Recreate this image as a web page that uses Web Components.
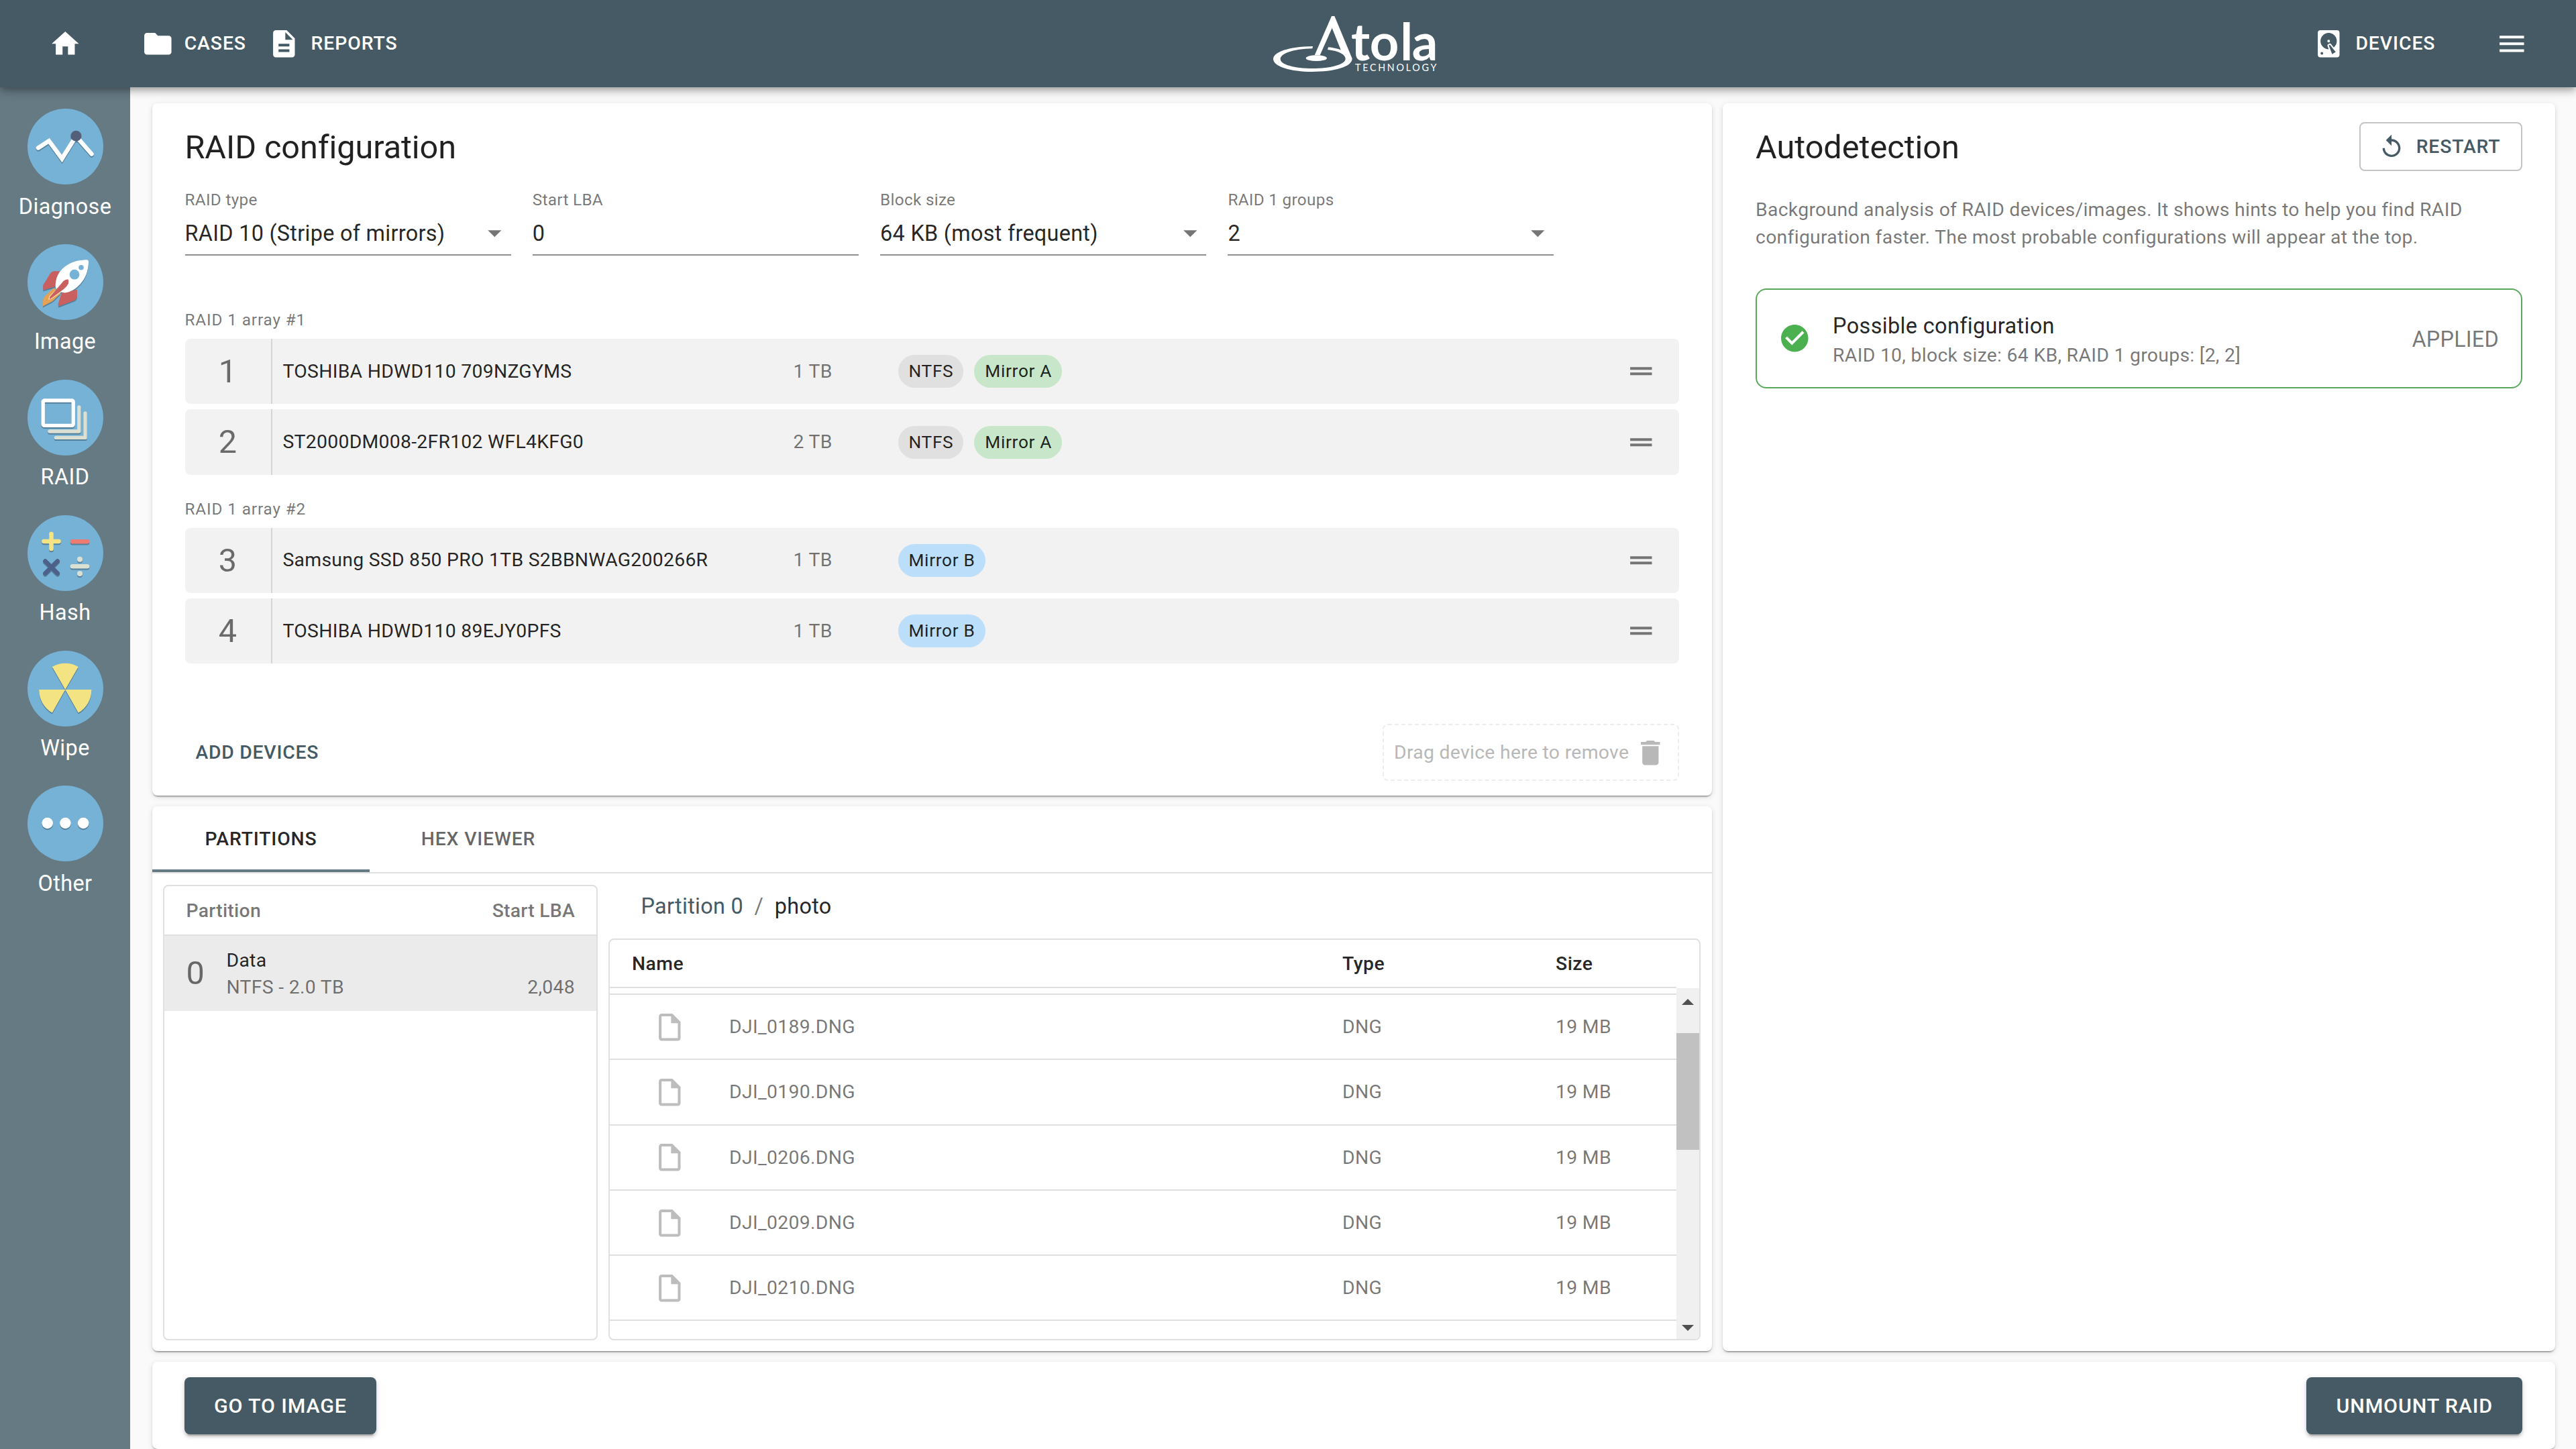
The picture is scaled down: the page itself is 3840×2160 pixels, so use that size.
<!DOCTYPE html>
<html lang="en">
<head>
<meta charset="utf-8">
<title>RAID configuration</title>
<style>
    html, body {
        margin: 0;
        height: 100%;
        overflow: hidden;
    }
    body {
        background: #fafafa;
        color: rgba(0, 0, 0, .87);
        font: 400 28.35px/40px Roboto, sans-serif;
        letter-spacing: .0107em;
    }
</style>
</head>
<body>
<raid-page></raid-page>

<script>
const ICONS = {
    home: 'M10 20v-6h4v6h5v-8h3L12 3 2 12h3v8z',
    folder: 'M10 4H4c-1.1 0-1.99.9-1.99 2L2 18c0 1.1.9 2 2 2h16c1.1 0 2-.9 2-2V8c0-1.1-.9-2-2-2h-8l-2-2z',
    report: 'M14 2H6c-1.1 0-1.99.9-1.99 2L4 20c0 1.1.89 2 1.99 2H18c1.1 0 2-.9 2-2V8l-6-6zm2 16H8v-2h8v2zm0-4H8v-2h8v2zm-3-5V3.5L18.5 9H13z',
    disk: 'M6,2H18A2,2 0 0,1 20,4V20A2,2 0 0,1 18,22H6A2,2 0 0,1 4,20V4A2,2 0 0,1 6,2M12,4A6,6 0 0,0 6,10C6,13.31 8.69,16 12.1,16L11.22,13.77C10.95,13.29 11.11,12.68 11.59,12.4L12.45,11.9C12.93,11.63 13.54,11.79 13.82,12.27L15.74,14.69C17.12,13.59 18,11.9 18,10A6,6 0 0,0 12,4M12,9A1,1 0 0,1 13,10A1,1 0 0,1 12,11A1,1 0 0,1 11,10A1,1 0 0,1 12,9M7,18A1,1 0 0,0 6,19A1,1 0 0,0 7,20A1,1 0 0,0 8,19A1,1 0 0,0 7,18M12.09,13.27L14.58,19.58L17.17,18.08L12.95,12.77L12.09,13.27Z',
    menu: 'M3 18h18v-2H3v2zm0-5h18v-2H3v2zm0-7v2h18V6H3z',
    arrow: 'M7 10l5 5 5-5z',
    handle: 'M20 9H4v2h16V9zM4 15h16v-2H4v2z',
    trash: 'M6 19c0 1.1.9 2 2 2h8c1.1 0 2-.9 2-2V7H6v12zM19 4h-3.5l-1-1h-5l-1 1H5v2h14V4z',
    replay: 'M12 5V1L7 6l5 5V7c3.31 0 6 2.69 6 6s-2.69 6-6 6-6-2.69-6-6H4c0 4.42 3.58 8 8 8s8-3.58 8-8-3.58-8-8-8z',
    check: 'M12 2C6.48 2 2 6.48 2 12s4.48 10 10 10 10-4.48 10-10S17.52 2 12 2zm-2 15l-5-5 1.41-1.41L10 14.17l7.59-7.59L19 8l-9 9z',
    file: 'M14 2H6c-1.1 0-1.99.9-1.99 2L4 20c0 1.1.89 2 1.99 2H18c1.1 0 2-.9 2-2V8l-6-6zM6 20V4h7v5h5v11H6z'
};

// round sidebar pictures, drawn on a 113px disc
const PICTURES = {
    diagnose: `
        <g fill="none" stroke="#fff" stroke-width="6.4" stroke-linecap="round">
            <path d="M16 58.5L32 48L51.4 74.5L72.4 41L95.5 67.5"/>
        </g>
        <circle cx="72.4" cy="40.7" r="8" fill="#54607a"/>`,
    image: `
        <path fill="#c95f5f" d="M48.3 40.3H39Q35.5 41 33 45L23.3 61V68.6L41.3 63.3Z"/>
        <path fill="#c95f5f" d="M74 67.8V77.4Q73.5 82 69 84L46.3 92.7L45.7 89L50.7 72.8Z"/>
        <path fill="#e6a155" d="M39 65.2L27.3 76.3Q23 80 23 86V92.5L37.3 85L49 74Z"/>
        <path fill="#fff" d="M88 23.3Q91.3 23.2 91 27C90.5 40 86.5 51 79 59C72 67 63 72 55.7 72.4L45 70.5Q41.5 66 41.7 60C42.5 46 50 36 61 30C70 25 79 23.6 88 23.3Z"/>
        <path fill="#f1d9a6" d="M32 78L44 66L50 72L36 81.5L31 83Z"/>
        <path fill="#c95f5f" d="M54 54.5Q57.5 52 60.7 52.5Q62 55 61 58.5Q59 63 54 67L33.5 82L33 79Z"/>
        <circle cx="70" cy="45.2" r="7.4" fill="#76b2d6"/>
        <circle cx="80" cy="34.8" r="3.8" fill="#76b2d6"/>`,
    raid: `
        <g fill="none" stroke-width="5.4" stroke-linecap="round" stroke-linejoin="round">
            <path stroke="#dbe0d3" d="M86 50V86.4H42.5M76.8 41V77H33"/>
            <rect x="23.2" y="31" width="45" height="37.4" rx="2" stroke="#fff"/>
        </g>`,
    hash: `
        <g fill="none" stroke-width="6.6" stroke-linecap="round">
            <path stroke="#f5e384" d="M24.5 39H46.5M35.5 28V50"/>
            <path stroke="#ee7b70" d="M67 39.2H89"/>
            <path stroke="#4d608a" d="M26.5 68.5L44.7 86.5M44.7 68.5L26.5 86.5"/>
            <path stroke="#dbe0d3" d="M67 76.2H89"/>
        </g>
        <g fill="#dbe0d3"><circle cx="78" cy="65.7" r="4"/><circle cx="78" cy="87" r="4"/></g>`,
    wipe: `
        <path fill="#f3e383" d="M56.3 58L36.8 23.9A39 39 0 0 1 75.8 23.9ZM56.3 58H95.3A39 39 0 0 1 75.8 92.5ZM56.3 58L36.8 92.5A39 39 0 0 1 17.3 58Z"/>`,
    other: `
        <g fill="#fff"><circle cx="29.7" cy="56" r="8.3"/><circle cx="56.4" cy="56" r="8.3"/><circle cx="83.2" cy="56" r="8.3"/></g>`
};

class BaseElement extends HTMLElement {
    connectedCallback() {
        if (this.shadowRoot) return;
        this.attachShadow({ mode: 'open' }).innerHTML = this.render();
    }
    attr(name) {
        return this.getAttribute(name) ?? '';
    }
}

class AppIcon extends BaseElement {
    render() {
        const size = this.getAttribute('size') ?? '48.6';
        return `
        <style>
            :host { display: block; flex: none; width: ${size}px; height: ${size}px; }
            svg { display: block; width: 100%; height: 100%; fill: currentColor; }
        </style>
        <svg viewBox="0 0 24 24"><path d="${ICONS[this.attr('name')]}"/></svg>`;
    }
}

class AtolaLogo extends BaseElement {
    render() {
        return `
        <style>
            :host { display: block; width: 330px; height: 130px; }
            svg { display: block; fill: #fff; }
        </style>
        <svg width="330" height="130" viewBox="0 0 990 390">
            <path d="M291 207C180 208 114 234 114 264C114 298 195 321 287 321C385 321 467 300 467 262L388 72H375L299 247H323L377 125L416 223C397 216 380 213 360 211L357 222C408 228 437 244 437 263C437 288 370 306 290 306C208 306 146 289 146 264C146 239 205 219 289 217Z"/>
            <ellipse cx="307" cy="260" rx="47" ry="13"/>
            <text x="462 545 682 734" y="270" font-family="Lato" font-size="228" font-weight="700" letter-spacing="0">tola</text>
            <text x="480" y="318" font-family="Lato" font-size="43" textLength="364" letter-spacing="0">TECHNOLOGY</text>
        </svg>`;
    }
}

class NavLink extends BaseElement {
    render() {
        return `
        <style>
            :host { display: flex; align-items: center; font-weight: 500; letter-spacing: .0325em; }
            span { margin-left: var(--text-gap, 15px); }
        </style>
        <app-icon name="${this.attr('icon')}"></app-icon><span><slot></slot></span>`;
    }
}

class TopBar extends BaseElement {
    render() {
        return `
        <style>
            :host {
                display: grid; grid-template-columns: 1fr 330px 1fr; height: 130px;
                background: #455a64; color: #fff; position: relative; z-index: 1;
                box-shadow: 0 4px 8px -2px rgba(0,0,0,.2), 0 8px 10px rgba(0,0,0,.14), 0 2px 20px rgba(0,0,0,.12);
            }
            div { display: flex; align-items: center; }
            .left { padding-left: 73px; }
            .left nav-link:nth-of-type(1) { margin-left: 89.5px; }
            .left nav-link:nth-of-type(2) { margin-left: 32px; --text-gap: 16px; }
            .right { justify-content: flex-end; padding-right: 71px; }
            .right nav-link { margin-right: 90px; --text-gap: 15.5px; }
            atola-logo { margin-left: 105px; }
        </style>
        <div class="left">
            <app-icon name="home"></app-icon>
            <nav-link icon="folder">CASES</nav-link>
            <nav-link icon="report">REPORTS</nav-link>
        </div>
        <atola-logo></atola-logo>
        <div class="right">
            <nav-link icon="disk">DEVICES</nav-link>
            <app-icon name="menu"></app-icon>
        </div>`;
    }
}

class SideItem extends BaseElement {
    render() {
        return `
        <style>
            :host {
                display: flex; flex-direction: column; align-items: center; height: 201.9px;
                color: #fff; font-size: 32.4px; letter-spacing: .0125em;
            }
            svg { display: block; }
            g.art { filter: drop-shadow(0 2px .5px rgba(0,0,0,.28)); }
            span { margin-top: 12.5px; line-height: 40px; }
        </style>
        <svg width="113" height="113" viewBox="0 0 113 113">
            <circle cx="56.5" cy="56.5" r="56.5" fill="#76b2d6"/>
            <g class="art">${PICTURES[this.attr('icon')]}</g>
        </svg>
        <span><slot></slot></span>`;
    }
}

class SideBar extends BaseElement {
    render() {
        return `
        <style>
            :host { display: block; width: 194px; padding-top: 32px; box-sizing: border-box; background: #667a84; }
        </style>
        <side-item icon="diagnose">Diagnose</side-item>
        <side-item icon="image">Image</side-item>
        <side-item icon="raid">RAID</side-item>
        <side-item icon="hash">Hash</side-item>
        <side-item icon="wipe">Wipe</side-item>
        <side-item icon="other">Other</side-item>`;
    }
}

class PaperCard extends BaseElement {
    render() {
        return `
        <style>
            :host {
                display: flex; flex-direction: column; box-sizing: border-box;
                background: #fff; border-radius: 8px;
                box-shadow: 0 4px 2px -3px rgba(0,0,0,.3), 0 2px 2px rgba(0,0,0,.16), 0 2px 8px rgba(0,0,0,.12);
            }
        </style>
        <slot></slot>`;
    }
}

class AppButton extends BaseElement {
    render() {
        return `
        <style>
            :host {
                display: flex; align-items: center; justify-content: center; box-sizing: border-box;
                border-radius: 8px; font-weight: 500; letter-spacing: .0286em; color: #455a64; white-space: nowrap;
            }
            :host([kind="outlined"]) { width: 243px; height: 73px; padding-right: 5px; border: 2px solid #c4c4c4; }
            :host([kind="outlined"]) app-icon { margin-right: 17px; }
            :host([kind="contained"]) {
                height: 85px; padding: 0 44px; background: #455a64; color: #fff; font-size: 30.4px;
                box-shadow: 0 6px 2px -4px rgba(0,0,0,.2), 0 4px 4px rgba(0,0,0,.14), 0 2px 10px rgba(0,0,0,.12);
            }
        </style>
        ${this.hasAttribute('icon') ? `<app-icon name="${this.attr('icon')}" size="40"></app-icon>` : ''}
        <slot></slot>`;
    }
}

class FormField extends BaseElement {
    render() {
        return `
        <style>
            :host { display: block; width: 486px; }
            label { display: block; color: rgba(0,0,0,.54); font-size: 24.3px; line-height: 26px; height: 24px; letter-spacing: .0125em; }
            div {
                display: flex; align-items: center; justify-content: space-between; height: 64px; margin-top: 6px;
                border-bottom: 2px solid #8e8e8e; font-size: 32.4px; letter-spacing: .009em;
            }
            span { padding-top: 2px; }
            app-icon { color: #757575; }
        </style>
        <label>${this.attr('label')}</label>
        <div><span><slot></slot></span>${this.hasAttribute('select') ? '<app-icon name="arrow"></app-icon>' : ''}</div>`;
    }
}

class TagChip extends BaseElement {
    render() {
        const color = { green: '#c8e6c9', blue: '#bbdefb' }[this.attr('color')] ?? '#e0e0e0';
        return `
        <style>
            :host {
                display: block; height: 49px; line-height: 48px; padding: 0 15px 0 16px; border-radius: 25px;
                background: ${color}; font-size: 26.3px; letter-spacing: .025em;
            }
        </style>
        <slot></slot>`;
    }
}

class DeviceRow extends BaseElement {
    render() {
        return `
        <style>
            :host { display: flex; align-items: center; height: 97.2px; border-radius: 8px; background: #f2f2f2; }
            .num {
                width: 128px; height: 97.2px; line-height: 97px; text-align: center;
                border-right: 2px solid #d5d5d5; font-size: 48.6px; color: rgba(0,0,0,.56); letter-spacing: 0;
            }
            .name { width: 761px; padding-left: 16px; letter-spacing: .0098em; }
            .size { width: 156px; color: rgba(0,0,0,.54); }
            .tags { display: flex; gap: 16px; flex: 1; }
            app-icon { margin-right: 32px; color: #757575; }
        </style>
        <div class="num">${this.attr('num')}</div>
        <div class="name">${this.attr('name')}</div>
        <div class="size">${this.attr('size')}</div>
        <div class="tags"><slot></slot></div>
        <app-icon name="handle"></app-icon>`;
    }
}

class RaidConfig extends BaseElement {
    render() {
        return `
        <style>
            :host { display: block; padding: 42px 49px 0 48.5px; }
            h1 { margin: 0 0 41px; font: inherit; font-size: 48.6px; line-height: 48px; letter-spacing: -.0015em; }
            .fields { display: flex; gap: 32.3px; margin-bottom: 84px; }
            h2 { margin: 0 0 16px; font: inherit; font-size: 24.3px; line-height: 24px; letter-spacing: .036em; color: rgba(0,0,0,.54); }
            .group { display: flex; flex-direction: column; gap: 8.3px; margin-bottom: 39px; }
            .group.last { margin-bottom: 0; }
            footer { display: flex; align-items: center; justify-content: space-between; margin-top: 90px; }
            footer app-button { margin-left: 16px; letter-spacing: .0265em; }
            .drop {
                display: flex; align-items: center; box-sizing: border-box; width: 442px; height: 85px;
                padding-left: 15px; border: 2px dashed #ededed; border-radius: 8px; color: #b8b8b8;
            }
            .drop app-icon { margin-left: 8px; }
        </style>
        <h1>RAID configuration</h1>
        <div class="fields">
            <form-field label="RAID type" select>RAID 10 (Stripe of mirrors)</form-field>
            <form-field label="Start LBA">0</form-field>
            <form-field label="Block size" select>64 KB (most frequent)</form-field>
            <form-field label="RAID 1 groups" select>2</form-field>
        </div>
        <h2>RAID 1 array #1</h2>
        <div class="group">
            <device-row num="1" name="TOSHIBA HDWD110 709NZGYMS" size="1 TB"><tag-chip>NTFS</tag-chip><tag-chip color="green">Mirror A</tag-chip></device-row>
            <device-row num="2" name="ST2000DM008-2FR102 WFL4KFG0" size="2 TB"><tag-chip>NTFS</tag-chip><tag-chip color="green">Mirror A</tag-chip></device-row>
        </div>
        <h2>RAID 1 array #2</h2>
        <div class="group last">
            <device-row num="3" name="Samsung SSD 850 PRO 1TB S2BBNWAG200266R" size="1 TB"><tag-chip color="blue">Mirror B</tag-chip></device-row>
            <device-row num="4" name="TOSHIBA HDWD110 89EJY0PFS" size="1 TB"><tag-chip color="blue">Mirror B</tag-chip></device-row>
        </div>
        <footer>
            <app-button>ADD DEVICES</app-button>
            <div class="drop">Drag device here to remove<app-icon name="trash"></app-icon></div>
        </footer>`;
    }
}

class TabStrip extends BaseElement {
    render() {
        const tabs = this.attr('tabs').split(',');
        return `
        <style>
            :host { display: flex; height: 98px; border-bottom: 2px solid #e0e0e0; }
            div {
                width: 324px; box-sizing: border-box; text-align: center; line-height: 97px;
                font-weight: 500; letter-spacing: .029em; color: rgba(0,0,0,.6);
            }
            .active { color: rgba(0,0,0,.87); border-bottom: 4px solid #667a84; }
        </style>
        ${tabs.map((tab, index) => `<div class="${index == 0 ? 'active' : ''}">${tab}</div>`).join('')}`;
    }
}

class PartitionList extends BaseElement {
    render() {
        return `
        <style>
            :host { display: block; box-sizing: border-box; width: 648px; border: 2px solid #e0e0e0; border-radius: 8px; }
            header, section { display: flex; padding: 0 32px 0 32.5px; }
            header {
                justify-content: space-between; height: 72px; line-height: 73px; border-bottom: 2px solid #e0e0e0;
                color: rgba(0,0,0,.54); font-weight: 500; letter-spacing: .009em;
            }
            section { height: 112px; background: #ebebeb; }
            .num { width: 60px; font-size: 48.6px; line-height: 112px; color: rgba(0,0,0,.56); letter-spacing: 0; }
            .text { flex: 1; padding-top: 17px; }
            .dim { color: rgba(0,0,0,.54); }
            .lba { padding-top: 57px; }
        </style>
        <header><span>Partition</span><span>Start LBA</span></header>
        <section>
            <div class="num">0</div>
            <div class="text"><div>Data</div><div class="dim">NTFS - 2.0 TB</div></div>
            <div class="dim lba">2,048</div>
        </section>`;
    }
}

class FileTable extends BaseElement {
    render() {
        const files = ['DJI_0189.DNG', 'DJI_0190.DNG', 'DJI_0206.DNG', 'DJI_0209.DNG', 'DJI_0210.DNG'];
        return `
        <style>
            :host {
                display: flex; flex-direction: column; box-sizing: border-box; height: 599px;
                border: 2px solid #e0e0e0; border-radius: 8px; overflow: hidden;
            }
            .row { display: grid; grid-template-columns: 145px 914px 318px 1fr; align-items: center; }
            .head {
                height: 72px; box-sizing: border-box; padding: 2px 0 0 33px; margin-right: 34px; border-bottom: 2px solid #e0e0e0;
                grid-template-columns: 1059px 318px 1fr; font-weight: 500; letter-spacing: .017em;
            }
            .body { display: flex; flex: 1; }
            .list { flex: 1; padding-top: 8px; }
            .file {
                height: 97.25px; box-sizing: border-box; padding: 1px 0 0 33px; border-top: 2px solid #e0e0e0;
                color: rgba(0,0,0,.54); letter-spacing: .0115em;
            }
            .file app-icon { margin-left: 32px; color: #bdbdbd; }
            .last { border-top: 2px solid #e0e0e0; }
            .bar {
                display: flex; flex-direction: column; align-items: center; justify-content: space-between;
                width: 34px; background: #f0f0f0;
            }
            .up, .down { width: 0; height: 0; border: 9px solid transparent; }
            .up { margin-top: 16px; border-bottom-color: #505050; border-top: 0; }
            .down { margin-bottom: 12px; border-top-color: #505050; border-bottom: 0; }
            .thumb { align-self: stretch; height: 174px; margin: 42px 0 auto; background: #c1c1c1; }
        </style>
        <div class="row head"><span>Name</span><span>Type</span><span>Size</span></div>
        <div class="body">
            <div class="list">
                ${files.map(file => `
                <div class="row file"><app-icon name="file"></app-icon><span>${file}</span><span>DNG</span><span>19 MB</span></div>`).join('')}
                <div class="last"></div>
            </div>
            <div class="bar"><i class="up"></i><i class="thumb"></i><i class="down"></i></div>
        </div>`;
    }
}

class PartitionsView extends BaseElement {
    render() {
        return `
        <style>
            :host { display: flex; flex-direction: column; flex: 1; }
            .panes { display: flex; flex: 1; gap: 16px; padding: 17px 17px 16px 16px; }
            .files { display: flex; flex-direction: column; flex: 1; }
            nav { height: 64px; line-height: 64px; padding: 0 0 16px 48.5px; font-size: 32.4px; letter-spacing: .0095em; }
            nav a { color: #455a64; }
            nav i { margin: 0 16.5px; font-style: normal; color: rgba(0,0,0,.54); }
        </style>
        <tab-strip tabs="PARTITIONS,HEX VIEWER"></tab-strip>
        <div class="panes">
            <partition-list></partition-list>
            <div class="files">
                <nav><a>Partition 0</a><i>/</i><span>photo</span></nav>
                <file-table></file-table>
            </div>
        </div>`;
    }
}

class AutodetectPanel extends BaseElement {
    render() {
        return `
        <style>
            :host { display: block; padding: 28px 49px 0 49px; }
            header { display: flex; align-items: center; justify-content: space-between; }
            h1 { margin: 0; padding-top: 2px; font: inherit; font-size: 48.6px; line-height: 48px; letter-spacing: 0; }
            p { margin: 38px 0 56px; line-height: 40.5px; color: rgba(0,0,0,.54); letter-spacing: .0105em; width: 1070px; }
            .result {
                display: flex; align-items: center; box-sizing: border-box; height: 149px; padding: 0 33px 0 32px;
                border: 2px solid #58a95c; border-radius: 16px;
            }
            .result app-icon { color: #4caf50; margin-right: 32.5px; }
            .text { flex: 1; padding-top: 2px; letter-spacing: .0105em; }
            .text div:first-child { font-size: 32.4px; line-height: 48px; letter-spacing: .0115em; }
            .dim { color: rgba(0,0,0,.54); }
            .state { font-size: 32.4px; padding-top: 2px; letter-spacing: .007em; }
        </style>
        <header><h1>Autodetection</h1><app-button kind="outlined" icon="replay">RESTART</app-button></header>
        <p>Background analysis of RAID devices/images. It shows hints to help you find RAID configuration faster. The most probable configurations will appear at the top.</p>
        <div class="result">
            <app-icon name="check"></app-icon>
            <div class="text"><div>Possible configuration</div><div class="dim">RAID 10, block size: 64 KB, RAID 1 groups: [2, 2]</div></div>
            <div class="dim state">APPLIED</div>
        </div>`;
    }
}

class RaidPage extends BaseElement {
    render() {
        return `
        <style>
            :host { display: flex; flex-direction: column; height: 2160px; }
            .main { display: flex; flex: 1; min-height: 0; }
            .content {
                display: grid; flex: 1; grid-template: 1032px 812px 130px / 2325px 1fr;
                gap: 16px 16px; padding: 24px 31px 0 33px;
            }
            .side { grid-column: 2; grid-row: 1 / 3; }
            .actions { grid-column: 1 / 3; flex-direction: row; justify-content: space-between; padding: 23px 49px 0 48px; }
        </style>
        <top-bar></top-bar>
        <div class="main">
            <side-bar></side-bar>
            <div class="content">
                <paper-card><raid-config></raid-config></paper-card>
                <paper-card class="side"><autodetect-panel></autodetect-panel></paper-card>
                <paper-card><partitions-view></partitions-view></paper-card>
                <paper-card class="actions">
                    <app-button kind="contained">GO TO IMAGE</app-button>
                    <app-button kind="contained">UNMOUNT RAID</app-button>
                </paper-card>
            </div>
        </div>`;
    }
}

customElements.define('app-icon', AppIcon);
customElements.define('atola-logo', AtolaLogo);
customElements.define('nav-link', NavLink);
customElements.define('top-bar', TopBar);
customElements.define('side-item', SideItem);
customElements.define('side-bar', SideBar);
customElements.define('paper-card', PaperCard);
customElements.define('app-button', AppButton);
customElements.define('form-field', FormField);
customElements.define('tag-chip', TagChip);
customElements.define('device-row', DeviceRow);
customElements.define('raid-config', RaidConfig);
customElements.define('tab-strip', TabStrip);
customElements.define('partition-list', PartitionList);
customElements.define('file-table', FileTable);
customElements.define('partitions-view', PartitionsView);
customElements.define('autodetect-panel', AutodetectPanel);
customElements.define('raid-page', RaidPage);
</script>
</body>
</html>
